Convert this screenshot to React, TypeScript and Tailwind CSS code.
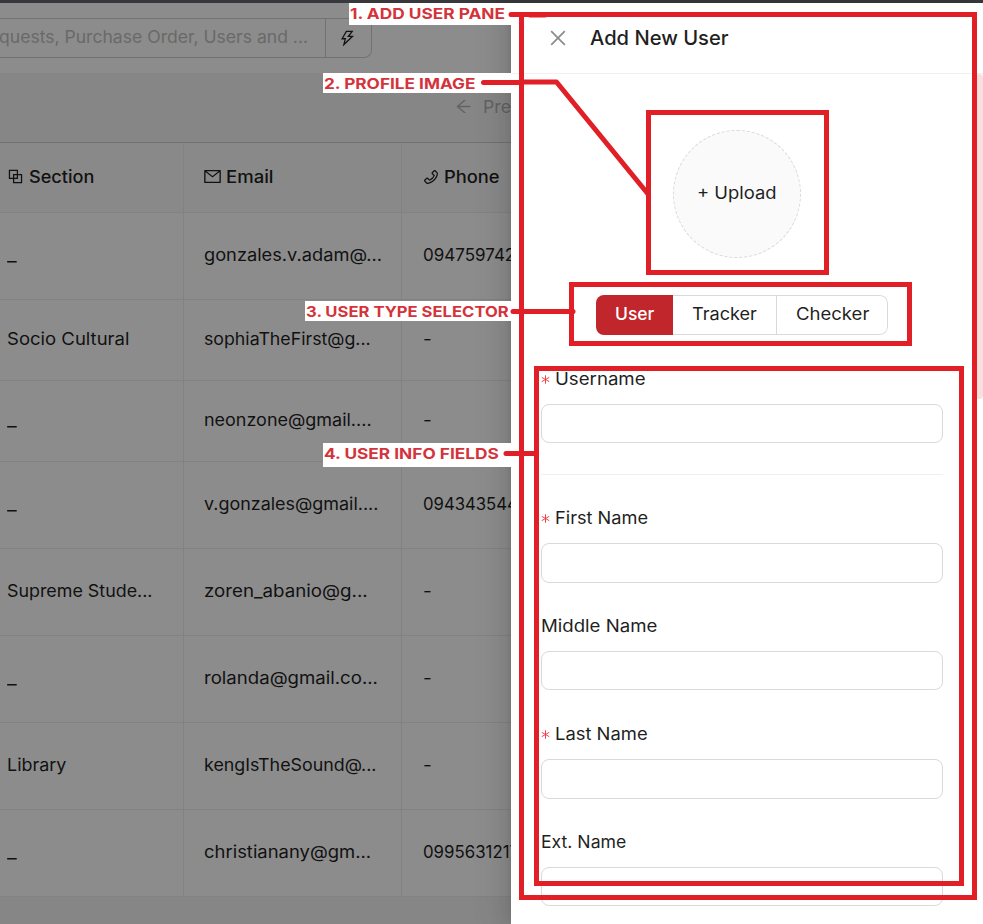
import { useLayoutEffect, useRef, useState } from "react";
import {
  AiOutlineArrowLeft,
  AiOutlineBlock,
  AiOutlineClose,
  AiOutlineMail,
  AiOutlinePhone,
  AiOutlineThunderbolt,
} from "react-icons/ai";

function Fit({ text, width, className = "" }: { text: string; width: number; className?: string }) {
  const ref = useRef<HTMLSpanElement>(null);
  const [scale, setScale] = useState(1);
  useLayoutEffect(() => {
    if (ref.current) {
      setScale(width / ref.current.offsetWidth);
    }
  }, [text, width]);
  return (
    <span className={`inline-block whitespace-nowrap ${className}`} style={{ width }}>
      <span ref={ref} className="inline-block origin-left" style={{ transform: `scaleX(${scale})` }}>
        {text}
      </span>
    </span>
  );
}

type Cell = [string, number];
const rows: { h: string; section: Cell; email: Cell; phone: Cell }[] = [
  { h: "h-[87px]", section: ["_", 10], email: ["gonzales.v.adam@...", 178], phone: ["09475974213", 110] },
  { h: "h-[81px]", section: ["Socio Cultural", 122], email: ["sophiaTheFirst@g...", 167], phone: ["-", 9] },
  { h: "h-[81px]", section: ["_", 10], email: ["neonzone@gmail....", 168], phone: ["-", 9] },
  { h: "h-[87px]", section: ["_", 10], email: ["v.gonzales@gmail....", 174], phone: ["09434354412", 111] },
  { h: "h-[87px]", section: ["Supreme Stude...", 146], email: ["zoren_abanio@g...", 164], phone: ["-", 9] },
  { h: "h-[87px]", section: ["_", 10], email: ["rolanda@gmail.co...", 174], phone: ["-", 9] },
  { h: "h-[87px]", section: ["Library", 59], email: ["kengIsTheSound@...", 173], phone: ["-", 9] },
  { h: "h-[87px]", section: ["_", 10], email: ["christianany@gm...", 167], phone: ["09956312170", 106] },
];

function Users() {
  return (
    <div className="flex h-full w-[700px] flex-col bg-[#f5f5f5]">
      <div className="flex h-[73px] shrink-0 items-start bg-white pt-[18px]">
        <div className="flex h-10 w-[372px] rounded-r-lg border border-l-0 border-[#cfcfcf] text-[17px]">
          <div className="flex w-[326px] items-center border-r border-[#cfcfcf] text-[#bfbfbf]">
            <Fit text="quests, Purchase Order, Users and ..." width={309} className="-ml-px" />
          </div>
          <div className="flex flex-1 items-center justify-center text-[19px]">
            <AiOutlineThunderbolt className="-ml-0.5" />
          </div>
        </div>
      </div>
      <div className="flex h-[70px] shrink-0 items-center border-b border-[#cfcfcf] pl-[454px] text-[17px] text-[#b2b2b2]">
        <AiOutlineArrowLeft className="relative -top-px size-[19px]" />
        <Fit text="Previous" width={72} className="ml-[10px]" />
      </div>
      <div className="flex h-[70px] shrink-0 border-b border-[#ededed] bg-[#fafafa] text-[17px] font-medium">
        <div className="flex w-[184px] items-center border-r border-[#ededed] pl-1.5">
          <AiOutlineBlock className="relative -top-px mr-1 size-[19px]" />
          <Fit text="Section" width={65} />
        </div>
        <div className="flex w-[218px] items-center border-r border-[#ededed] pl-[19px]">
          <AiOutlineMail className="relative -top-px mr-1 size-[19px]" />
          <Fit text="Email" width={48} />
        </div>
        <div className="flex items-center pl-5">
          <AiOutlinePhone className="relative -top-px mr-1 size-[18px]" />
          <Fit text="Phone" width={56} />
        </div>
      </div>
      {rows.map((r, i) => (
        <div key={i} className={`flex shrink-0 border-b border-[#ededed] bg-white text-[17px] ${r.h}`}>
          <div className="flex w-[184px] items-center border-r border-[#ededed] pl-[7px]">
            <Fit text={r.section[0]} width={r.section[1]} />
          </div>
          <div className="flex w-[218px] items-center border-r border-[#ededed] pl-5">
            <Fit text={r.email[0]} width={r.email[1]} />
          </div>
          <div className="flex items-center pl-[21px]">
            <Fit text={r.phone[0]} width={r.phone[1]} />
          </div>
        </div>
      ))}
    </div>
  );
}

function Field({ label, width, required, h = "h-10" }: { label: string; width: number; required?: boolean; h?: string }) {
  return (
    <div>
      <div className="flex h-[26px] items-center text-[17px]">
        {required && (
          <svg viewBox="0 0 10 10" className="mr-[5px] size-[9px] stroke-[#ee4047]" fill="none">
            <path d="M5 .3v9.4M.8 2.6l8.4 4.8M.8 7.4l8.4-4.8" strokeWidth="1.1" />
          </svg>
        )}
        <Fit text={label} width={width} className="relative top-px" />
      </div>
      <div className={`mt-3 rounded-lg border border-[#d9d9d9] bg-white ${h}`} />
    </div>
  );
}

function Drawer() {
  return (
    <aside className="absolute top-[3px] right-0 bottom-0 flex w-[472px] flex-col bg-white shadow-[-6px_0_16px_0_rgba(0,0,0,0.08),-3px_0_6px_-4px_rgba(0,0,0,0.12),-9px_0_28px_8px_rgba(0,0,0,0.05)]">
      <header className="flex h-[71px] shrink-0 items-center border-b border-[#f0f0f0] pl-[36px]">
        <AiOutlineClose className="size-[22px] text-[#8c8c8c]" />
        <Fit text="Add New User" width={139} className="ml-[21px] text-[20px] font-medium" />
      </header>
      <div className="flex min-h-0 flex-1">
        <div className="ml-[30px] flex w-[402px] shrink-0 flex-col pt-14">
          <div className="ml-[132px] flex size-32 items-center justify-center rounded-full border border-dashed border-[#d9d9d9] bg-[#fafafa] text-[17px]">
            <Fit text="+ Upload" width={80} />
          </div>
          <div className="mt-[37px] ml-[55px] flex h-10 w-[292px] overflow-hidden rounded-lg text-[17px]">
            <div className="flex w-[77px] items-center justify-center bg-[#c0262b] font-medium text-white">
              <Fit text="User" width={39} />
            </div>
            <div className="flex w-[104px] items-center justify-center border-y border-r border-[#d9d9d9]">
              <Fit text="Tracker" width={65} />
            </div>
            <div className="flex flex-1 items-center justify-center rounded-r-lg border-y border-r border-[#d9d9d9]">
              <Fit text="Checker" width={73} />
            </div>
          </div>
          <div className="mt-[31px] flex flex-col">
            <Field label="Username" width={91} required h="h-[39px]" />
            <div className="mt-[31px] mb-[30px] h-px bg-[#f0f0f0]" />
            <div className="flex flex-col gap-[30px]">
              <Field label="First Name" width={93} required />
              <Field label="Middle Name" width={116} h="h-[39px]" />
              <div className="mt-px">
                <Field label="Last Name" width={93} required />
              </div>
              <Field label="Ext. Name" width={85} h="h-[39px]" />
            </div>
          </div>
        </div>
        <div className="ml-auto h-[325px] w-[8px] rounded-lg bg-[#f9e0df]" />
      </div>
    </aside>
  );
}

const tag = "absolute flex items-center bg-white pl-px font-[Inter] text-[14.5px] font-bold text-[#d4333b]";

function Annotations() {
  return (
    <>
      <div className={`${tag} top-[3px] left-[349px] h-[22px] w-[163px]`}>
        <Fit text="1. ADD USER PANE" width={155} />
      </div>
      <div className={`${tag} top-[73px] left-[323px] h-5 w-[189px]`}>
        <Fit text="2. PROFILE IMAGE" width={152} className="relative top-px" />
      </div>
      <div className={`${tag} top-[301px] left-[305px] h-5 w-[207px]`}>
        <Fit text="3. USER TYPE SELECTOR" width={203} className="relative top-px" />
      </div>
      <div className={`${tag} top-[443px] left-[323px] h-6 w-[189px]`}>
        <Fit text="4. USER INFO FIELDS" width={175} className="relative -top-px" />
      </div>
      <svg className="absolute inset-0" width="983" height="924" fill="none" stroke="#e11f27" strokeWidth="5">
        <rect x="521.5" y="14.5" width="453" height="883" />
        <rect x="648.5" y="112.5" width="178" height="160" />
        <rect x="571.5" y="284.5" width="338" height="59" />
        <rect x="536.5" y="368.5" width="425" height="515" />
        <g strokeLinecap="round" strokeLinejoin="round">
          <path d="M511 14.5h12M530 15h15" />
          <path d="M483.5 82.5H520L521 82h35.5L648 194" />
          <path d="M513 311.5h60" />
          <path d="M506 453.5h28" />
        </g>
      </svg>
    </>
  );
}

export default function App() {
  return (
    <main className="relative h-[924px] w-[983px] overflow-hidden bg-white font-[Inter,'Open_Sans',sans-serif] text-[#1f1f1f]">
      <Users />
      <div className="absolute inset-0 bg-black/45" />
      <div className="absolute inset-x-0 top-0 h-[3px] bg-[#39383c]" />
      <Drawer />
      <Annotations />
    </main>
  );
}
